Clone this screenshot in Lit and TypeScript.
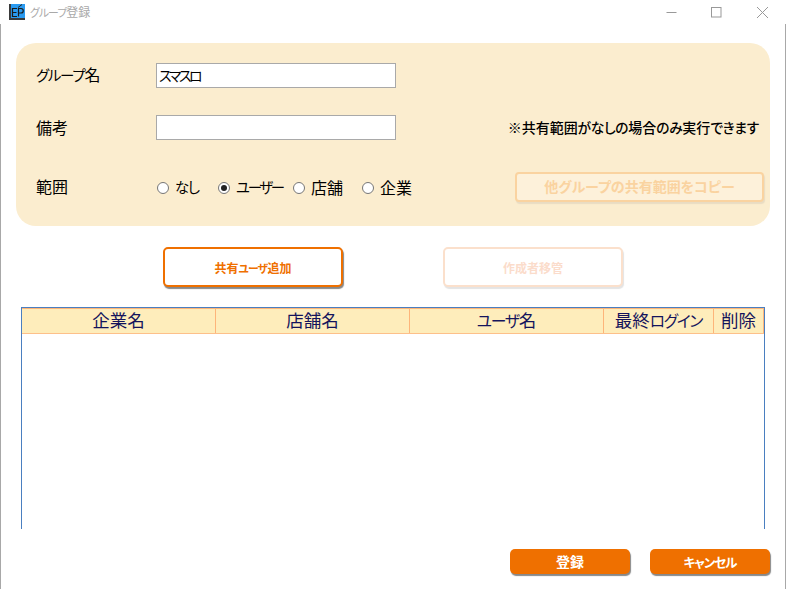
import { LitElement, html, css } from "lit";
import { customElement } from "lit/decorators.js";

@customElement("app-root")
export class AppRoot extends LitElement {
  static styles = css`
    :host {
      display: block;
      width: 786px;
      height: 589px;
      overflow: hidden;
      background: #fff;
      font-family: "Noto Sans CJK JP", "Noto Sans", sans-serif;
      font-feature-settings: "palt";
      color: #000;
    }
    .k { font-size: 0.9em; letter-spacing: -0.08em; }
    .k.tight { letter-spacing: -0.16em; }
    .k.loose { font-size: 0.98em; letter-spacing: -0.02em; }
    .window {
      box-sizing: border-box;
      width: 786px;
      height: 589px;
      border-left: 1px solid #a8a8a8;
      border-right: 1px solid #a8a8a8;
      display: flex;
      flex-direction: column;
    }
    .titlebar {
      height: 24px;
      margin-left: -1px;
      margin-right: -1px;
      background: #fff;
      display: flex;
      align-items: center;
      padding-left: 9px;
      flex: none;
    }
    .logo { width: 16px; height: 16px; flex: none; }
    .title { margin-left: 5px; font-size: 12px; color: #a9a9a9; line-height: 24px; }
    .controls { margin-left: auto; display: flex; align-items: center; gap: 29px; padding-right: 16px; }
    .controls svg { display: block; width: 16px; height: 16px; }
    .panel {
      margin: 19px 15px 0 15px;
      height: 183px;
      box-sizing: border-box;
      background: #fbedcf;
      border-radius: 20px;
      padding: 20px 4px 0 20px;
      flex: none;
      display: flex;
      flex-direction: column;
    }
    .row { display: flex; align-items: center; }
    .row.r1 { height: 25px; }
    .row.r2 { height: 25px; margin-top: 27px; }
    .row.r3 { height: 30px; margin-top: 32px; }
    .label { width: 120px; font-size: 16px; line-height: 22px; margin-top: -2px; flex: none; }
    input.text {
      box-sizing: border-box;
      width: 240px;
      height: 25px;
      border: 1px solid #a9a9a9;
      background: #fff;
      padding: 0 2px 2px;
      margin: 0;
      font: 14px "Noto Sans CJK JP", sans-serif;
      font-feature-settings: "palt";
      letter-spacing: -2.400px;
      color: #000;
      outline: none;
    }
    .note { margin-left: auto; font-size: 14px; font-weight: 500; padding-right: 7px; line-height: 20px; margin-top: -2px; white-space: nowrap; }
    .radios { display: flex; align-items: center; width: 359px; flex: none; }
    .radio { display: flex; align-items: center; font-size: 16px; line-height: 22px; white-space: nowrap; }
    .dot {
      box-sizing: border-box;
      width: 12px;
      height: 12px;
      border-radius: 50%;
      border: 1px solid #767676;
      background: #fff;
      margin: 2px 6px 0 1px;
      display: flex;
      align-items: center;
      justify-content: center;
      flex: none;
    }
    .dot.on::after { content: ""; width: 6px; height: 6px; border-radius: 50%; background: #222; }
    .r-none { width: 61px; }
    .r-user { width: 75px; }
    .r-store { width: 69px; }
    button {
      font-family: "Noto Sans CJK JP", sans-serif;
      font-feature-settings: "palt";
      box-sizing: border-box;
      padding: 0;
      cursor: default;
    }
    .copy {
      width: 249px;
      height: 30px;
      padding-bottom: 2px;
      background: #fdf1da;
      border: 2px solid #fad3a0;
      border-radius: 4px;
      box-shadow: 1px 2px 1px #e9dcc3;
      color: #fad3a0;
      font-size: 14px;
      font-weight: 700;
      flex: none;
    }
    .actions {
      display: flex;
      padding: 21px 0 0 162px;
      gap: 100px;
      flex: none;
    }
    .outline {
      width: 180px;
      height: 40px;
      background: #fff;
      border: 2px solid #ef7000;
      border-radius: 5px;
      box-shadow: 1px 2px 1px #888;
      color: #ef7000;
      font-size: 12px;
      font-weight: 700;
    }
    .outline.off {
      border-color: #fbe0cc;
      color: #fbdccb;
      box-shadow: 1px 2px 1px #e4e4e4;
    }
    .table {
      margin: 20px 0 0 20px;
      width: 744px;
      height: 222px;
      box-sizing: border-box;
      border: 1px solid #4a7fc0;
      border-bottom: none;
      flex: none;
    }
    .thead {
      display: grid;
      grid-template-columns: 194px 194px 194px 110px 1fr;
      background: #feedbb;
      border-top: 1px solid #fdb57a;
      border-bottom: 1px solid #fdc08a;
      box-sizing: border-box;
      height: 26px;
    }
    .th {
      box-sizing: border-box;
      border-right: 1px solid #fdb57a;
      text-align: center;
      font-size: 17.500px;
      line-height: 22px;
      color: #14145c;
      white-space: nowrap;
    }
    .footer {
      display: flex;
      justify-content: flex-end;
      gap: 20px;
      padding: 20px 15px 0 0;
      flex: none;
    }
    .primary {
      width: 120px;
      height: 25px;
      padding-bottom: 2px;
      background: #ef7000;
      border: none;
      border-radius: 5px;
      box-shadow: 1px 2px 1px #888;
      color: #fff;
      font-size: 14px;
      font-weight: 700;
    }
  `;

  render() {
    return html`
      <div class="window">
        <div class="titlebar">
          <svg class="logo" viewBox="0 0 16 16">
            <rect width="16" height="16" fill="#2a9af0" />
            <rect x="0" y="0" width="2" height="16" fill="#3a3a3a" />
            <rect x="0" y="14" width="16" height="2" fill="#3a3a3a" />
            <path d="M8 4.500H3.500v8H8M3.500 8.500H7.500M9.500 12.500V4.500h2.500a2 2 0 0 1 0 4.500H9.500" fill="none" stroke="#1a1a1a" stroke-width="1.200" />
            <path d="M9 3.500l4-3" fill="none" stroke="#222" stroke-width="1" />
          </svg>
          <span class="title"><span class="k">グループ</span>登録</span>
          <div class="controls">
            <svg viewBox="0 0 16 16"><path d="M2.500 8.500h10" stroke="#999" stroke-width="1" fill="none" /></svg>
            <svg viewBox="0 0 16 16"><rect x="2.500" y="3.500" width="9.500" height="9.500" stroke="#999" stroke-width="1" fill="none" /></svg>
            <svg viewBox="0 0 16 16"><path d="M3 3l11 11M14 3l-11 11" stroke="#999" stroke-width="1" fill="none" /></svg>
          </div>
        </div>
        <div class="panel">
          <div class="row r1">
            <span class="label"><span class="k">グループ</span>名</span>
            <input class="text" .value=${"スマスロ"} />
          </div>
          <div class="row r2">
            <span class="label">備考</span>
            <input class="text" />
            <span class="note">※共有範囲<span class="k loose">がなしの</span>場合<span class="k loose">のみ</span>実行<span class="k loose">できます</span></span>
          </div>
          <div class="row r3">
            <span class="label">範囲</span>
            <div class="radios">
              <span class="radio r-none"><i class="dot"></i><span class="k">なし</span></span>
              <span class="radio r-user"><i class="dot on"></i><span class="k tight">ユーザー</span></span>
              <span class="radio r-store"><i class="dot"></i>店舗</span>
              <span class="radio"><i class="dot"></i>企業</span>
            </div>
            <button class="copy">他グループの共有範囲をコピー</button>
          </div>
        </div>
        <div class="actions">
          <button class="outline">共有<span class="k">ユーザ</span>追加</button>
          <button class="outline off">作成者移管</button>
        </div>
        <div class="table">
          <div class="thead">
            <div class="th">企業名</div>
            <div class="th">店舗名</div>
            <div class="th"><span class="k">ユーザ</span>名</div>
            <div class="th">最終<span class="k">ログイン</span></div>
            <div class="th">削除</div>
          </div>
        </div>
        <div class="footer">
          <button class="primary">登録</button>
          <button class="primary"><span class="k">キャンセル</span></button>
        </div>
      </div>
    `;
  }
}
